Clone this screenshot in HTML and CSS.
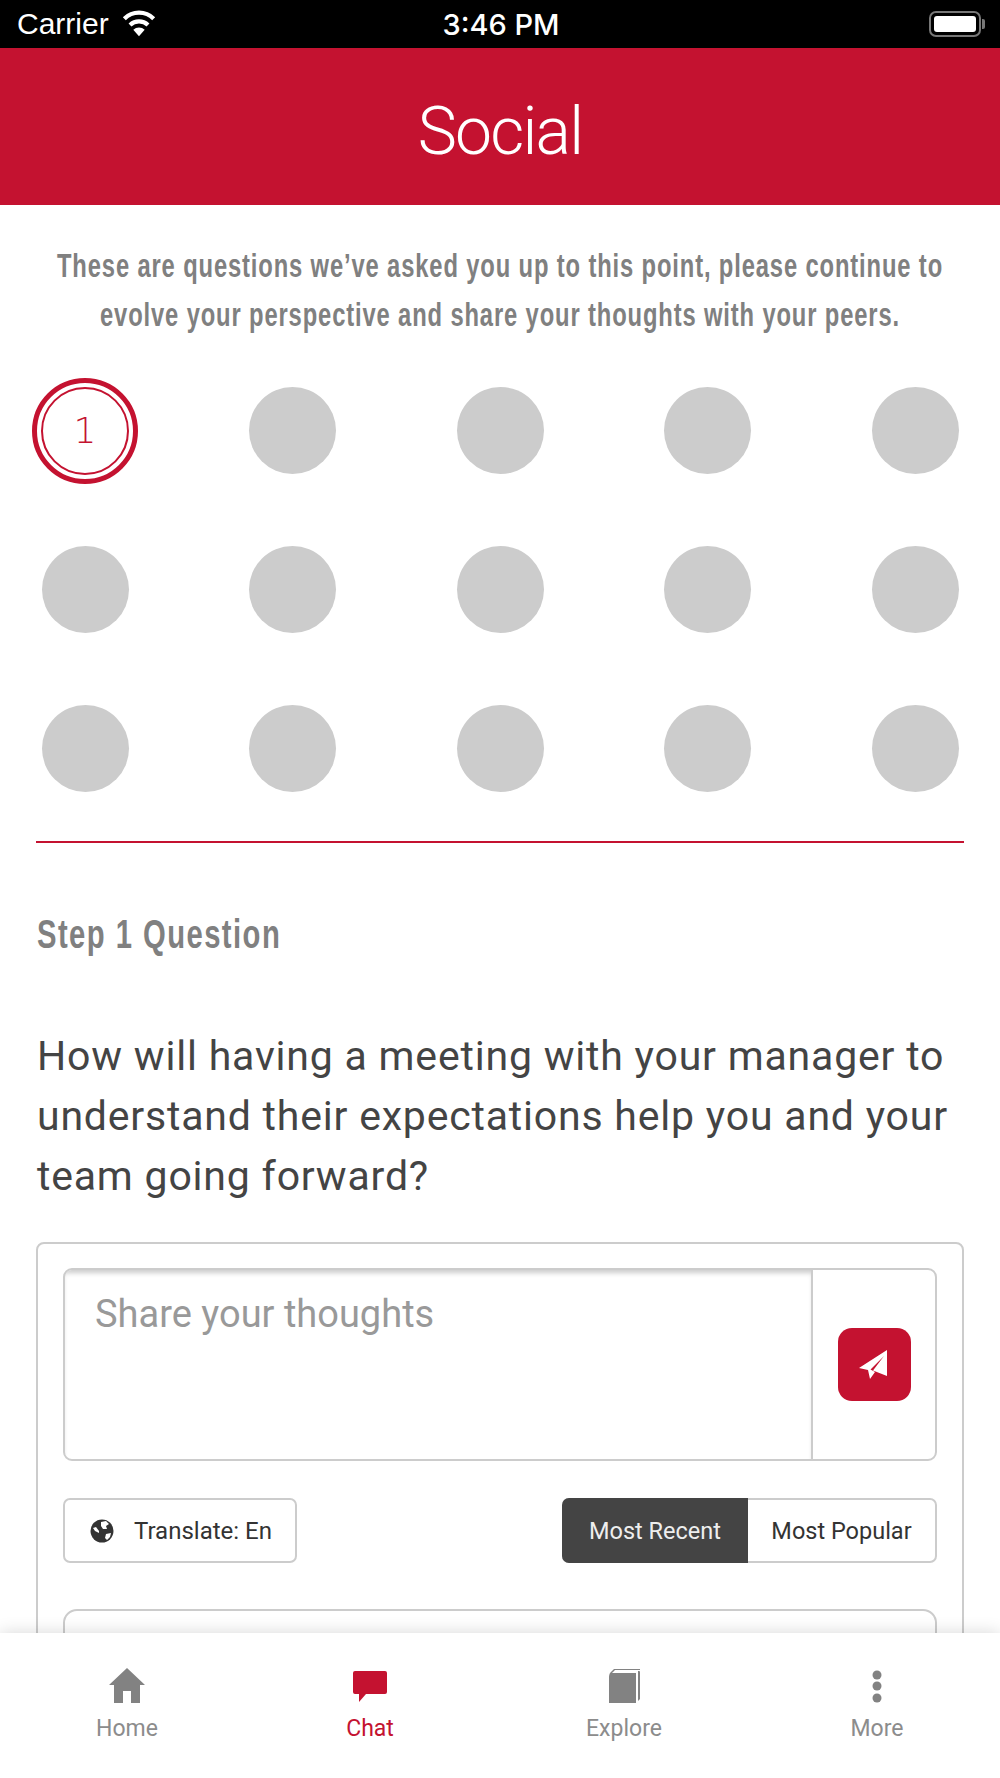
FILE: index.html
```html
<!DOCTYPE html>
<html lang="en">
<head>
    <meta charset="UTF-8">
    <meta name="viewport" content="width=device-width, initial-scale=1.0">
    <title>Social</title>
    <link rel="stylesheet" href="styles.css">
</head>
<body>
    <div class="status-bar">
        <div class="status-left">
            <span>Carrier</span>
            <svg class="wifi" width="36" height="28" viewBox="0 0 38 28">
                <path d="M19 27 L13 20 A9 9 0 0 1 25 20 Z" fill="#fff"/>
                <path d="M9.5 15 A14 14 0 0 1 28.5 15" fill="none" stroke="#fff" stroke-width="4.5"/>
                <path d="M3.5 8.5 A22 22 0 0 1 34.5 8.5" fill="none" stroke="#fff" stroke-width="4.5"/>
            </svg>
        </div>
        <div class="status-time">3:46 PM</div>
        <div class="status-right">
            <div class="battery"><div class="battery-fill"></div></div>
            <div class="battery-tip"></div>
        </div>
    </div>

    <div class="header">Social</div>

    <div class="content">
        <div class="intro">
            <p class="intro-line">These are questions we’ve asked you up to this point, please continue to</p>
            <p class="intro-line">evolve your perspective and share your thoughts with your peers.</p>
        </div>

        <div class="steps">
            <div class="step-cell"><div class="step-active"><div class="step-inner">1</div></div></div>
            <div class="step-cell"><div class="step"></div></div>
            <div class="step-cell"><div class="step"></div></div>
            <div class="step-cell"><div class="step"></div></div>
            <div class="step-cell"><div class="step"></div></div>
            <div class="step-cell"><div class="step"></div></div>
            <div class="step-cell"><div class="step"></div></div>
            <div class="step-cell"><div class="step"></div></div>
            <div class="step-cell"><div class="step"></div></div>
            <div class="step-cell"><div class="step"></div></div>
            <div class="step-cell"><div class="step"></div></div>
            <div class="step-cell"><div class="step"></div></div>
            <div class="step-cell"><div class="step"></div></div>
            <div class="step-cell"><div class="step"></div></div>
            <div class="step-cell"><div class="step"></div></div>
        </div>

        <div class="divider"></div>

        <h2 class="step-title">Step 1 Question</h2>
        <p class="question">How will having a meeting with your manager to understand their expectations help you and your team going forward?</p>

        <div class="card">
            <div class="composer">
                <div class="composer-input">Share your thoughts</div>
                <div class="composer-send">
                    <button class="send-button">
                        <svg class="send-icon" width="30" height="30" viewBox="0 0 30 30">
                            <path d="M28 0 L0 18 L9 20 L11 29 L16 22 L11.5 19.5 L25 6 L14 20.5 L28 26 Z" fill="#fff"/>
                        </svg>
                    </button>
                </div>
            </div>

            <div class="controls">
                <button class="translate">
                    <svg width="24" height="24" viewBox="0 0 24 24">
                        <circle cx="12" cy="12" r="11.5" fill="#333"/>
                        <path d="M11 3 L16 2 L19 5 L16 7 L17 10 L13 10 L11 7 Z M16 15 L21 14 L20 18 L17 21 L15 19 Z M3 9 L5 12 L9 14 L9 12 L6 8 Z" fill="#fff"/>
                    </svg>
                    <span>Translate: En</span>
                </button>
                <div class="sort">
                    <button class="sort-item sort-active">Most Recent</button>
                    <button class="sort-item">Most Popular</button>
                </div>
            </div>

            <div class="comment"></div>
        </div>
    </div>

    <div class="tabbar">
        <div class="tab">
            <svg width="36" height="36" viewBox="0 0 36 36">
                <path d="M18 0 L36 17 L31 17 L31 35 L22 35 L22 23 L14 23 L14 35 L5 35 L5 17 L0 17 Z" fill="#828282"/>
            </svg>
            <span>Home</span>
        </div>
        <div class="tab tab-active">
            <svg width="36" height="36" viewBox="0 0 36 36">
                <path d="M3 3 H33 Q35 3 35 5 V24 Q35 26 33 26 H14 L7 34 V26 H3 Q1 26 1 24 V5 Q1 3 3 3 Z" fill="#c41230"/>
            </svg>
            <span>Chat</span>
        </div>
        <div class="tab">
            <svg width="36" height="36" viewBox="0 0 36 36">
                <path d="M3 9 Q3 5 6 3 L8 1 H34 V2 H9 L6 5 H30 V35 H3 Z" fill="#828282"/>
                <path d="M32 3 H33 Q34 3 34 4 V31 L32 33 Z" fill="#828282"/>
            </svg>
            <span>Explore</span>
        </div>
        <div class="tab">
            <svg width="36" height="36" viewBox="0 0 36 36">
                <circle cx="18" cy="7" r="4.5" fill="#828282"/>
                <circle cx="18" cy="18" r="4.5" fill="#828282"/>
                <circle cx="18" cy="30" r="4.5" fill="#828282"/>
            </svg>
            <span>More</span>
        </div>
    </div>
</body>
</html>
```

FILE: styles.css
```css
* {
    box-sizing: border-box;
}

html, body {
    margin: 0;
    padding: 0;
}

body {
    width: 1000px;
    height: 1778px;
    display: flex;
    flex-direction: column;
    overflow: hidden;
    background-color: #fff;
    font-family: 'Roboto', Arial, sans-serif;
    color: #444;
}

button {
    margin: 0;
    padding: 0;
    border: none;
    background: none;
    font: inherit;
    color: inherit;
}

/* status bar */
.status-bar {
    height: 48px;
    flex: none;
    display: grid;
    grid-template-columns: 1fr auto 1fr;
    align-items: center;
    padding: 0 15px 0 17px;
    background-color: #000;
    color: #fff;
    font-family: 'Liberation Sans', Arial, sans-serif;
    font-size: 30px;
}

.status-left {
    display: flex;
    align-items: center;
    gap: 12px;
}

.status-time {
    font-family: 'Inter', sans-serif;
    font-weight: 500;
    font-size: 29px;
}

.status-right {
    display: flex;
    align-items: center;
    justify-content: flex-end;
    gap: 1px;
}

.battery {
    width: 52px;
    height: 26px;
    padding: 3px;
    border: 2px solid #777;
    border-radius: 7px;
}

.battery-fill {
    width: 100%;
    height: 100%;
    border-radius: 3px;
    background-color: #fff;
}

.battery-tip {
    width: 3px;
    height: 10px;
    border-radius: 0 2px 2px 0;
    background-color: #777;
}

/* header */
.header {
    height: 157px;
    flex: none;
    display: flex;
    align-items: center;
    justify-content: center;
    padding-top: 10px;
    background-color: #c41230;
    color: #fff;
    font-weight: 300;
    font-size: 66px;
    letter-spacing: -1.8px;
}

/* scrolling part */
.content {
    flex: 1;
    min-height: 0;
    overflow: hidden;
    padding: 36px 36px 0;
}

.intro {
    margin: 0 -200px;
    text-align: center;
    font-family: 'Liberation Sans', sans-serif;
    font-weight: bold;
    font-size: 33px;
    line-height: 49px;
    letter-spacing: 1.2px;
    color: #808080;
}

.intro-line {
    margin: 0;
    white-space: nowrap;
    transform: scaleX(0.72);
}

.steps {
    display: grid;
    grid-template-columns: repeat(5, 106px);
    justify-content: space-between;
    grid-auto-rows: 159px;
    margin: 12px -4px 0;
}

.step-cell {
    display: flex;
    align-items: center;
    justify-content: center;
}

.step {
    width: 87px;
    height: 87px;
    border-radius: 50%;
    background-color: #ccc;
}

.step-active {
    width: 106px;
    height: 106px;
    padding: 4px;
    border: 5px solid #c41230;
    border-radius: 50%;
}

.step-inner {
    width: 100%;
    height: 100%;
    display: flex;
    align-items: center;
    justify-content: center;
    border: 2px solid #c41230;
    border-radius: 50%;
    color: #c41230;
    font-family: 'DejaVu Sans', sans-serif;
    font-weight: 200;
    font-size: 36px;
}

.divider {
    height: 2px;
    margin-top: 13px;
    background-color: #c41230;
}

.step-title {
    margin: 66px 0 0 1px;
    white-space: nowrap;
    transform: scaleX(0.73);
    transform-origin: left;
    font-family: 'Liberation Sans', sans-serif;
    font-weight: bold;
    font-size: 40px;
    line-height: 50px;
    letter-spacing: 2px;
    color: #808080;
}

.question {
    margin: 67px 0 0 1px;
    font-size: 41px;
    line-height: 60px;
    letter-spacing: 0.8px;
    color: #444;
}

.card {
    margin-top: 36px;
    height: 500px;
    padding: 24px 25px;
    border: 2px solid #ccc;
    border-radius: 8px;
}

.composer {
    display: flex;
    height: 193px;
    border: 2px solid #ccc;
    border-radius: 9px;
    overflow: hidden;
}

.composer-input {
    flex: 1;
    padding: 22px 30px;
    box-shadow: inset 0 5px 5px -2px #ccc;
    font-size: 38px;
    line-height: 44px;
    color: #999;
}

.composer-send {
    width: 124px;
    flex: none;
    display: flex;
    align-items: center;
    justify-content: center;
    border-left: 2px solid #ccc;
}

.send-button {
    width: 73px;
    height: 73px;
    display: flex;
    align-items: center;
    justify-content: center;
    border-radius: 14px;
    background-color: #c41230;
}

.controls {
    display: flex;
    justify-content: space-between;
    margin-top: 37px;
}

.translate {
    width: 234px;
    height: 65px;
    display: flex;
    align-items: center;
    gap: 20px;
    padding-left: 25px;
    border: 2px solid #ccc;
    border-radius: 7px;
    font-size: 24px;
    color: #333;
}

.sort {
    display: flex;
    width: 375px;
    height: 65px;
    border: 2px solid #ccc;
    border-radius: 7px;
}

.sort-item {
    flex: 1;
    font-size: 23.5px;
    color: #333;
}

.sort-active {
    flex: none;
    width: 186px;
    margin: -2px 0 -2px -2px;
    border-radius: 7px 0 0 7px;
    background-color: #444;
    color: #eee;
}

.comment {
    height: 120px;
    margin-top: 46px;
    border: 2px solid #ccc;
    border-radius: 14px;
}

/* bottom tabs */
.tabbar {
    height: 145px;
    flex: none;
    display: grid;
    grid-template-columns: 254px 232px 276px 230px;
    padding-top: 35px;
    background-color: #fff;
    box-shadow: 0 0 16px rgba(0, 0, 0, 0.16);
    position: relative;
    font-size: 23px;
    color: #8c8c8c;
}

.tab {
    display: flex;
    flex-direction: column;
    align-items: center;
    gap: 10px;
    line-height: 30px;
}

.tab-active {
    color: #c41230;
}
```
